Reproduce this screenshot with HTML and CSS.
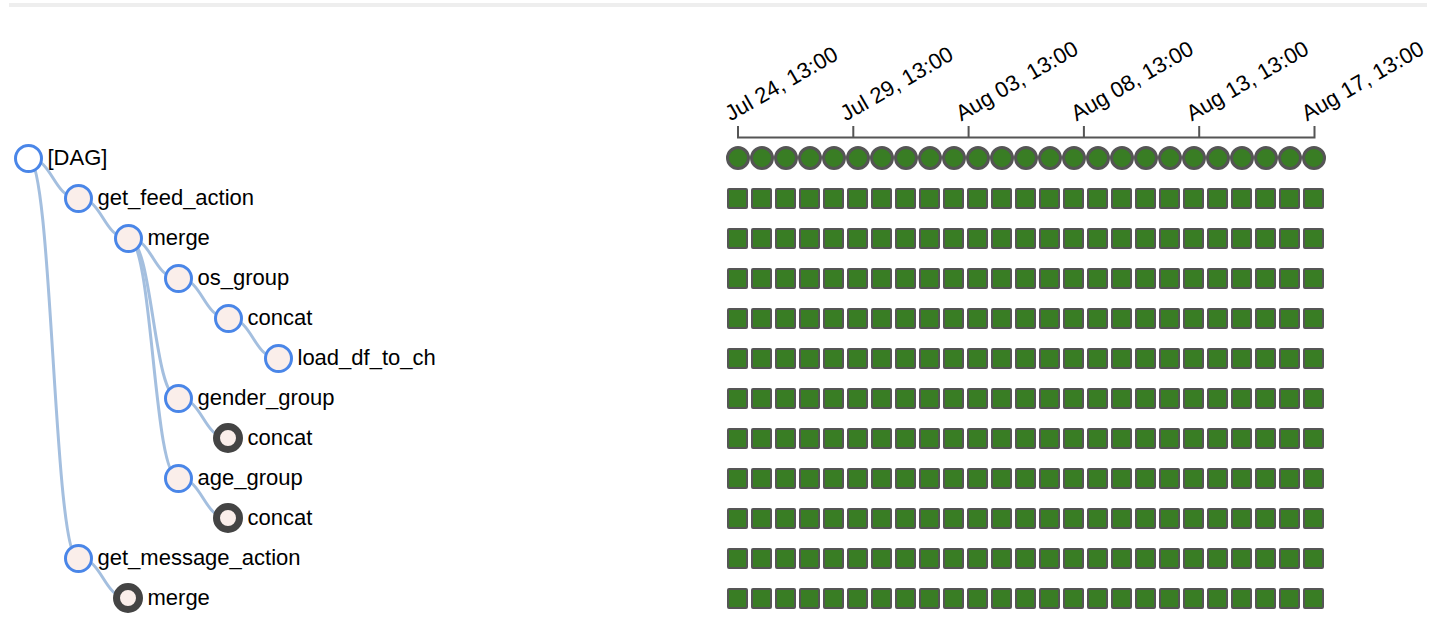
FILE: index.html
```html
<!DOCTYPE html>
<html>
<head>
<meta charset="utf-8">
<link rel="stylesheet" href="styles.css">
</head>
<body>
<div class="topbar"></div>
<div class="tree-view">
  <div class="header">
    <div class="left-spacer"></div>
    <svg class="axis" width="704" height="131" viewBox="0 0 704 131">
      <path class="axis-domain" d="M12,119V130.5H588.5V119"/>
      <path class="axis-tick" d="M127.3,119V130.5M242.6,119V130.5M357.9,119V130.5M473.2,119V130.5"/>
      <g class="tick-labels">
        <text transform="translate(12,130.5) rotate(-30)" x="1.5" y="-17.5">Jul 24, 13:00</text>
        <text transform="translate(127.3,130.5) rotate(-30)" x="1.5" y="-17.5">Jul 29, 13:00</text>
        <text transform="translate(242.6,130.5) rotate(-30)" x="1.5" y="-17.5">Aug 03, 13:00</text>
        <text transform="translate(357.9,130.5) rotate(-30)" x="1.5" y="-17.5">Aug 08, 13:00</text>
        <text transform="translate(473.2,130.5) rotate(-30)" x="1.5" y="-17.5">Aug 13, 13:00</text>
        <text transform="translate(588.5,130.5) rotate(-30)" x="1.5" y="-17.5">Aug 17, 13:00</text>
      </g>
    </svg>
  </div>
  <div class="rows">
    <svg class="links" width="725" height="480" viewBox="0 0 725 480">
      <path d="M28,20C53,20 53,60 78,60"/>
      <path d="M28,20C53,20 53,420 78,420"/>
      <path d="M78,60C103,60 103,100 128,100"/>
      <path d="M128,100C153,100 153,140 178,140"/>
      <path d="M178,140C203,140 203,180 228,180"/>
      <path d="M228,180C253,180 253,220 278,220"/>
      <path d="M128,100C153,100 153,260 178,260"/>
      <path d="M178,260C203,260 203,300 228,300"/>
      <path d="M128,100C153,100 153,340 178,340"/>
      <path d="M178,340C203,340 203,380 228,380"/>
      <path d="M78,420C103,420 103,460 128,460"/>
    </svg>
    <div id="row-list"></div>
  </div>
</div>
<script src="app.js"></script>
</body>
</html>
```
FILE: app.js
```js
var nodes = [
  ["[DAG]", 0, "root"],
  ["get_feed_action", 1, "task"],
  ["merge", 2, "task"],
  ["os_group", 3, "task"],
  ["concat", 4, "task"],
  ["load_df_to_ch", 5, "task"],
  ["gender_group", 3, "task"],
  ["concat", 4, "dup"],
  ["age_group", 3, "task"],
  ["concat", 4, "dup"],
  ["get_message_action", 1, "task"],
  ["merge", 2, "dup"]
];
var list = document.getElementById("row-list");
nodes.forEach(function (n, i) {
  var row = document.createElement("div");
  row.className = "row";
  var node = document.createElement("div");
  node.className = "node lvl-" + n[1];
  var dotWrap = document.createElement("span");
  dotWrap.className = "dot-wrap";
  var dot = document.createElement("span");
  dot.className = "dot " + n[2];
  dotWrap.appendChild(dot);
  var label = document.createElement("span");
  label.className = "label";
  label.textContent = n[0];
  node.appendChild(dotWrap);
  node.appendChild(label);
  var cells = document.createElement("div");
  cells.className = i === 0 ? "cells runs" : "cells tasks";
  for (var k = 0; k < 25; k++) {
    var c = document.createElement("span");
    c.className = i === 0 ? "run success" : "ti success";
    cells.appendChild(c);
  }
  row.appendChild(node);
  row.appendChild(cells);
  list.appendChild(row);
});
```
FILE: styles.css
```css
html, body {
  margin: 0;
  padding: 0;
  background: #fff;
}
body {
  font-family: "Liberation Sans", Arial, sans-serif;
  color: #000;
  width: 1430px;
  height: 620px;
  overflow: hidden;
}
.topbar {
  height: 4px;
  margin: 3px 3px 0 9px;
  background: #eeeeee;
}
.tree-view {
  display: flex;
  flex-direction: column;
}
.header {
  display: flex;
  height: 131px;
}
.left-spacer {
  width: 725.5px;
  flex: none;
}
.axis {
  display: block;
  overflow: visible;
}
.axis-domain, .axis-tick {
  fill: none;
  stroke: #555;
  stroke-width: 2px;
}
.tick-labels text {
  font-family: "Liberation Sans", Arial, sans-serif;
  font-size: 22px;
  fill: #000;
}
.rows {
  position: relative;
  z-index: 0;
}
.links {
  position: absolute;
  left: 0;
  top: 0;
  z-index: 0;
}
.links path {
  fill: none;
  stroke: #a4bfdf;
  stroke-width: 3px;
}
.row {
  display: flex;
  align-items: center;
  height: 40px;
}
.node {
  width: 725.5px;
  flex: none;
  box-sizing: border-box;
  display: flex;
  align-items: center;
}
.lvl-0 { padding-left: 13px; }
.lvl-1 { padding-left: 63px; }
.lvl-2 { padding-left: 113px; }
.lvl-3 { padding-left: 163px; }
.lvl-4 { padding-left: 213px; }
.lvl-5 { padding-left: 263px; }
.dot-wrap {
  position: relative;
  z-index: 1;
  width: 30px;
  height: 30px;
  display: flex;
  align-items: center;
  justify-content: center;
  flex: none;
}
.dot {
  display: block;
  box-sizing: border-box;
  border-radius: 50%;
}
.dot.root, .dot.task {
  width: 29px;
  height: 29px;
  border: 3px solid #4a86e8;
  background: #faeeea;
}
.dot.root {
  background: #ffffff;
}
.dot.dup {
  width: 30px;
  height: 30px;
  border: 7px solid #444444;
  background: #faeeea;
}
.label {
  margin-left: 4.5px;
  font-size: 22px;
  line-height: 26px;
  white-space: nowrap;
}
.cells {
  display: flex;
  align-items: center;
}
.cells.tasks {
  gap: 3px;
  padding-left: 1.5px;
}
.run {
  display: block;
  box-sizing: border-box;
  width: 24px;
  height: 24px;
  border-radius: 50%;
  border: 3px solid #555;
  background: #397d24;
}
.ti {
  display: block;
  box-sizing: border-box;
  width: 21px;
  height: 21px;
  border-radius: 2px;
  border: 2px solid #555;
  background: #397d24;
}
```
